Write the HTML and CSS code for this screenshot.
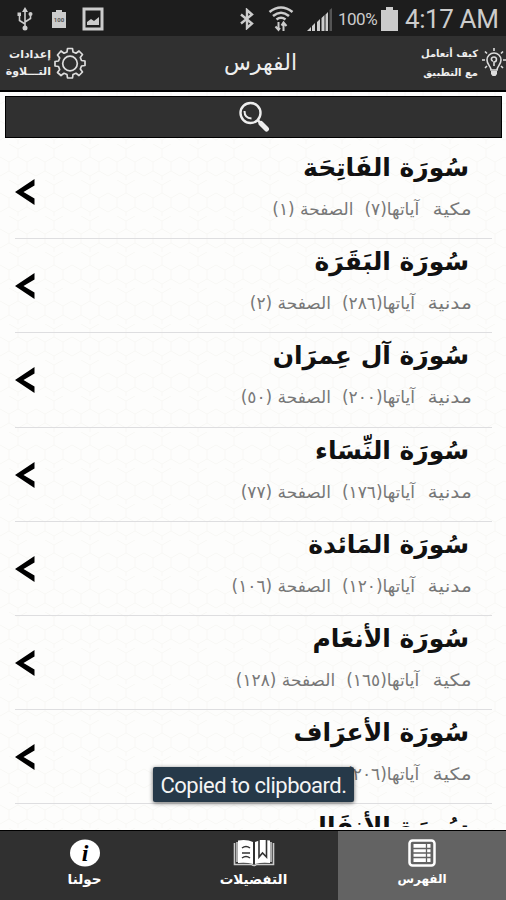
FILE: index.html
```
<!DOCTYPE html>
<html lang="ar">

<head>
    <meta charset="UTF-8">
    <title>الفهرس</title>
    <link rel="stylesheet" href="styles.css">
</head>

<body>
<div class="phone">
    <div class="status">
        <svg class="usb" width="18" height="26" viewBox="0 0 18 26" fill="none" stroke="#ccc" stroke-width="1.6">
            <path d="M9 4v18M9 18L3.500 14.500V9M9 16l5.500-3.500V8"/>
            <path d="M9 1l3 5H6zM1.500 6.500h3.500v3.500H1.500z" fill="#ccc" stroke="none"/>
            <circle cx="14.500" cy="8" r="2" fill="#ccc" stroke="none"/>
            <circle cx="9" cy="22" r="2.500" fill="#ccc" stroke="none"/>
        </svg>
        <svg class="batt" width="16" height="20" viewBox="0 0 16 20">
            <path d="M1 3h4V1h6v2h4v16H1z" fill="#ccc"/>
            <text x="8" y="13" text-anchor="middle" font-size="6" font-weight="bold" fill="#555">100</text>
        </svg>
        <svg class="pic" width="22" height="24" viewBox="0 0 22 24">
            <path d="M2 2h18v20H2z" fill="none" stroke="#ccc" stroke-width="3"/>
            <path d="M5 18v-3l4-3 3 2 5-4v8z" fill="#ccc"/>
        </svg>
        <svg class="bt" width="14" height="22" viewBox="0 0 14 22" fill="none" stroke="#ccc" stroke-width="2.400">
            <path d="M1 6.500l11 9L7 20V2l5 4.500L1 15.500"/>
        </svg>
        <svg class="wifi" width="26" height="26" viewBox="0 0 26 26" fill="none" stroke="#ccc" stroke-width="2.600">
            <path d="M1.500 6Q13-3 24.500 6M5 10q8-6.500 16 0M8.500 13.500q4.500-3.500 9 0"/>
            <path d="M10.500 16v8M7.500 20.500l3 3.500 1.500-2M15.500 25v-8M13.500 19.500l2-3 3 3.500" stroke-width="2"/>
        </svg>
        <svg class="signal" width="26" height="24" viewBox="0 0 26 24" fill="#ccc">
            <path d="M0 24l4-4v4zM5 19l3-3v8H5zM10 15l3-3v12h-3zM14.500 11l3-3v16h-3zM18.500 7.500l2.500-2.500v19h-2.500z"/>
            <path d="M22.500 3L25 1v23h-2.500z" fill="#555"/>
        </svg>
        <span class="percent">100%</span>
        <svg class="full" width="17" height="24" viewBox="0 0 17 24"><path d="M0 3h5V0h7v3h5v21H0z" fill="#ccc"/></svg>
        <span class="clock">4:17 AM</span>
    </div>

    <div class="header">
        <div class="settings">
            <span>إعدادات<br>التـــلاوة</span>
            <svg width="32" height="32" viewBox="0 0 32 32" fill="none" stroke="#ddd" stroke-width="1.700" stroke-linejoin="round">
                <path d="M13.500 1.500h5l.5 3.500 3 1.200 3-2.200 3.500 3.500-2.200 3 1.200 3 3.500.5v4.500l-3.500.5-1.200 3 2.200 3-3.500 3.500-3-2.200-3 1.200-.5 3.500h-5l-.5-3.500-3-1.200-3 2.200L3.500 25.500l2.200-3-1.200-3-3.500-.5v-4.500l3.500-.5 1.200-3-2.200-3L7 4l3 2.200L13 5z"/>
                <circle cx="16" cy="16.500" r="7.300"/>
            </svg>
        </div>
        <h1>الفهرس</h1>
        <div class="help">
            <span>كيف أتعامل<br>مع التطبيق</span>
            <svg width="24" height="30" viewBox="0 0 24 30" fill="none" stroke="#ddd" stroke-width="1.600">
                <path d="M9 22c0-4-4-5-4-10a7 7 0 0 1 14 0c0 5-4 6-4 10z"/>
                <path d="M12 18v-4c3 0 3.500-5 0-5s-3 4-1 4M12 0v3M3 3.500l2 2M21 3.500l-2 2M0 12h3M21 12h3M3 20l2-2M21 20l-2-2"/>
                <path d="M9 23h6v3l-1.500 2h-3L9 26z" fill="#ddd" stroke="none"/>
            </svg>
        </div>
    </div>

    <div class="search">
        <svg width="32" height="32" viewBox="0 0 32 32" fill="none" stroke="#eee">
            <circle cx="12.500" cy="12" r="10" stroke-width="2.400"/>
            <path d="M6.500 10q0 7 7 7.500" stroke-width="2"/>
            <path d="M19.500 19l3 3" stroke-width="2.500"/>
            <path d="M23 22.500l5.500 5.500" stroke-width="5" stroke-linecap="round"/>
        </svg>
    </div>

    <div class="list">
        <div class="row">
            <h2>سُورَة الفَاتِحَة</h2>
            <p><span class="place">مكية</span><span>آياتها(٧)</span><span>الصفحة (١)</span></p>
            <svg class="arrow" viewBox="0 0 20 26"><path d="M19.500 0v6.500L8.500 13l11 6.500V26L0 13z"/></svg>
        </div>
        <div class="row">
            <h2>سُورَة البَقَرَة</h2>
            <p><span class="place">مدنية</span><span>آياتها(٢٨٦)</span><span>الصفحة (٢)</span></p>
            <svg class="arrow" viewBox="0 0 20 26"><path d="M19.500 0v6.500L8.500 13l11 6.500V26L0 13z"/></svg>
        </div>
        <div class="row">
            <h2>سُورَة آل عِمرَان</h2>
            <p><span class="place">مدنية</span><span>آياتها(٢٠٠)</span><span>الصفحة (٥٠)</span></p>
            <svg class="arrow" viewBox="0 0 20 26"><path d="M19.500 0v6.500L8.500 13l11 6.500V26L0 13z"/></svg>
        </div>
        <div class="row">
            <h2>سُورَة النِّسَاء</h2>
            <p><span class="place">مدنية</span><span>آياتها(١٧٦)</span><span>الصفحة (٧٧)</span></p>
            <svg class="arrow" viewBox="0 0 20 26"><path d="M19.500 0v6.500L8.500 13l11 6.500V26L0 13z"/></svg>
        </div>
        <div class="row">
            <h2>سُورَة المَائدة</h2>
            <p><span class="place">مدنية</span><span>آياتها(١٢٠)</span><span>الصفحة (١٠٦)</span></p>
            <svg class="arrow" viewBox="0 0 20 26"><path d="M19.500 0v6.500L8.500 13l11 6.500V26L0 13z"/></svg>
        </div>
        <div class="row">
            <h2>سُورَة الأنعَام</h2>
            <p><span class="place">مكية</span><span>آياتها(١٦٥)</span><span>الصفحة (١٢٨)</span></p>
            <svg class="arrow" viewBox="0 0 20 26"><path d="M19.500 0v6.500L8.500 13l11 6.500V26L0 13z"/></svg>
        </div>
        <div class="row">
            <h2>سُورَة الأعرَاف</h2>
            <p><span class="place">مكية</span><span>آياتها(٢٠٦)</span></p>
            <svg class="arrow" viewBox="0 0 20 26"><path d="M19.500 0v6.500L8.500 13l11 6.500V26L0 13z"/></svg>
        </div>
        <div class="row">
            <h2>سُورَة الأنفَال</h2>
        </div>
    </div>

    <div class="tabs">
        <div class="tab">
            <svg width="30" height="28" viewBox="0 0 30 28">
                <ellipse cx="15" cy="14" rx="15" ry="13.500" fill="#fff"/>
                <text class="info" x="15" y="22" text-anchor="middle">i</text>
            </svg>
            <span>حولنا</span>
        </div>
        <div class="tab">
            <svg width="42" height="28" viewBox="0 0 42 28">
                <path d="M1.500 4v21.500h17q2.500 2 5 0h17V4M4 3v20M38 3v20" fill="none" stroke="#ccc" stroke-width="1.600"/>
                <path d="M5 1.500q9-1.500 15 1.500v22q-7-2-15-1zM22 3q6-3 15-1.500V24q-8-1-15 1z" fill="#fff"/>
                <path d="M9 9q4-3 8 0M9 14h8M9 19q4-3 8 0" fill="none" stroke="#333" stroke-width="1.500"/>
                <path d="M26 1v17l3.500-4 4 4V1" fill="#fff" stroke="#333" stroke-width="1.600"/>
            </svg>
            <span>التفضيلات</span>
        </div>
        <div class="tab active">
            <svg width="28" height="28" viewBox="0 0 28 28" fill="none" stroke="#fff">
                <rect x="1.500" y="1.500" width="25" height="25" rx="3" stroke-width="2.500"/>
                <rect x="5.500" y="5" width="17" height="18" fill="#fff" stroke="none"/>
                <path d="M5 9.500h18M5 14h18M5 18.500h18M18.500 5v18" stroke="#636363" stroke-width="1.300"/>
            </svg>
            <span>الفهرس</span>
        </div>
    </div>

    <div class="toast">Copied to clipboard.</div>
</div>
</body>

</html>
```
FILE: styles.css
```
body
{
    margin: 0;
    font-family: "DejaVu Sans", sans-serif;
}

h1,h2,p
{
    margin: 0;
}

svg
{
    display: block;
    flex: none;
}

.phone
{
    position: relative;
    display: flex;
    flex-direction: column;
    width: 506px;
    height: 900px;
    overflow: hidden;
    background: #fdfdfc url("data:image/svg+xml,%3Csvg xmlns='http://www.w3.org/2000/svg' width='36' height='36'%3E%3Cpath d='M9 0l9 5 9-5M18 5v8l9 5 9-5M18 13l-9 5-9-5M9 18v9l9 5 9-5v-9M9 27l-9 5M27 27l9 5M18 32v4' fill='none' stroke='%23f8f7f5'/%3E%3C/svg%3E");
}

.status
{
    display: flex;
    align-items: center;
    height: 36px;
    box-sizing: border-box;
    padding: 2px 0 0 16px;
    background: #1d1d1d;
    color: #ccc;
    font-family: Roboto, sans-serif;
}

.batt { margin-left: 17px; }
.pic { margin-left: 15px; }
.bt { margin-left: 136px; }
.wifi { margin-left: 14px; }
.signal { margin-left: 13px; }
.full { margin-left: 5px; }

.percent
{
    width: 38px;
    margin-left: 5px;
    font-size: 17px;
    letter-spacing: -0.5px;
}

.clock
{
    margin-left: 7px;
    font-size: 26px;
    letter-spacing: -0.4px;
    white-space: nowrap;
}

.header
{
    display: grid;
    grid-template-columns: 90px 1fr 90px;
    align-items: center;
    height: 56px;
    box-sizing: border-box;
    border-bottom: 2px solid #000;
    background: #303030;
    color: #eee;
}

.settings,.help
{
    display: flex;
    align-items: center;
    font-size: 11px;
    font-weight: bold;
    line-height: 17px;
    white-space: nowrap;
}

.settings
{
    padding-left: 5px;
    gap: 3px;
}

.settings span
{
    width: 46px;
    text-align: right;
}

.help
{
    justify-content: flex-end;
    gap: 4px;
    font-size: 10px;
    line-height: 19px;
    text-align: right;
}

.header h1
{
    padding-left: 15px;
    font-size: 22px;
    font-weight: normal;
    line-height: 30px;
    text-align: center;
}

.search
{
    display: flex;
    justify-content: center;
    align-items: center;
    height: 42px;
    box-sizing: border-box;
    margin: 4px 4px 0 5px;
    border: 1px solid #000;
    background: #303030;
}

/* the last row is cut a little above the tab bar */
.list
{
    flex: 1;
    overflow: hidden;
    margin-bottom: 3px;
    padding-top: 7px;
    direction: rtl;
}

.row
{
    position: relative;
    height: 94.200px;
    box-sizing: border-box;
    margin: 0 14px 0 15px;
    padding-right: 20px;
    border-bottom: 1px solid #dedee0;
}

.row h2
{
    padding-right: 3px;
    height: 49px;
    font-size: 25px;
    line-height: 45px;
    color: #111;
    white-space: nowrap;
}

.row p
{
    display: flex;
    gap: 11px;
    font-size: 17px;
    line-height: 30px;
    color: #777;
    white-space: nowrap;
}

.place
{
    margin-left: 9px;
    transform: scaleX(1.200);
    transform-origin: right;
}

.arrow
{
    position: absolute;
    left: 0;
    top: 34px;
    width: 20px;
    height: 26px;
}

.tabs
{
    display: grid;
    grid-template-columns: 169px 169px 168px;
    height: 70px;
    box-sizing: border-box;
    border-top: 1px solid #000;
    background: #303030;
}

.tab
{
    display: flex;
    flex-direction: column;
    align-items: center;
    padding-top: 8px;
    color: #fff;
    font-size: 13.500px;
    font-weight: bold;
    line-height: 24px;
}

.active
{
    background: #636363;
    font-size: 12px;
}

.info
{
    font: italic bold 24px "Liberation Serif", serif;
}

.toast
{
    position: absolute;
    left: 153px;
    top: 767px;
    width: 201px;
    height: 35px;
    border-radius: 2px;
    background: #263949;
    box-shadow: 0 1px 4px rgba(0,0,0,0.6);
    color: #f4f4f4;
    font: 22px/37px Roboto, sans-serif;
    letter-spacing: -0.5px;
    text-align: center;
    white-space: nowrap;
}
```
